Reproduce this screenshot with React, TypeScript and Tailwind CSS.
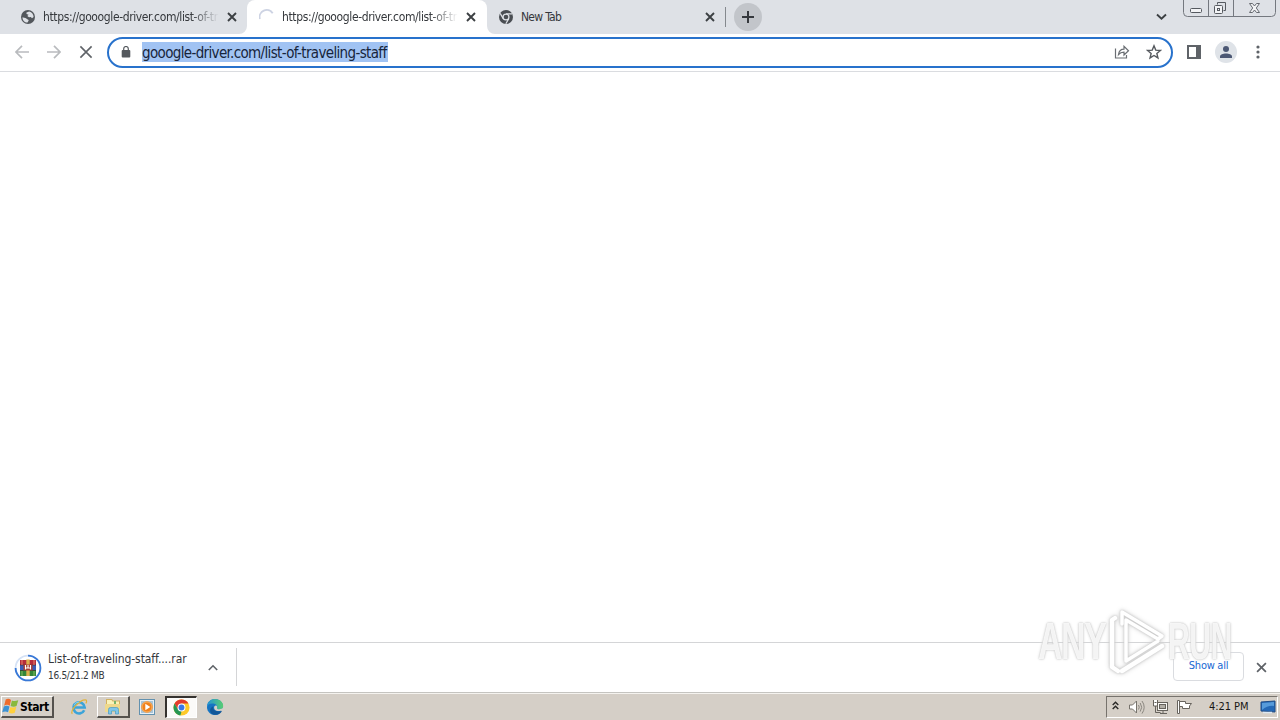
import type { ReactNode } from "react";

const FONT = "font-['DejaVu_Sans_Condensed','DejaVu_Sans',sans-serif] [font-stretch:condensed]";

function Cross({ size, width = 2, color = "#3c4043" }: { size: number; width?: number; color?: string }) {
  return (
    <svg width={size} height={size} viewBox="0 0 10 10" className="block shrink-0">
      <path d="M1 1 9 9M9 1 1 9" stroke={color} strokeWidth={width} fill="none" />
    </svg>
  );
}

function Globe() {
  return (
    <svg width="14" height="14" viewBox="0 0 14 14" className="block shrink-0">
      <circle cx="7" cy="7" r="7" fill="#53575c" />
      <path d="M1.500 7.200C2 8 4.600 7.300 5.300 8.500c.8 1.100 2.200.7 2.400 2.100L6.500 12.600C3.500 12.500 1.300 10.200 1.500 7.200ZM5.500 2.600 8.200 1.500c2.700.6 4.400 3 4.400 5.500L11 8.300 9.800 7.100 8 7.200 6.300 6 7.600 4.800 5.500 4Z" fill="#dee1e6" />
    </svg>
  );
}

function ChromeMono() {
  return (
    <svg width="14" height="14" viewBox="0 0 14 14" className="block shrink-0">
      <circle cx="7" cy="7" r="7" fill="#4a4e53" />
      <path d="M7 3.800h6.200M4.200 8.600 1.200 3.400M9.800 8.600 6.800 13.800" stroke="#dee1e6" strokeWidth="1.200" />
      <circle cx="7" cy="7" r="3.600" fill="#dee1e6" />
      <circle cx="7" cy="7" r="2.300" fill="#4a4e53" />
    </svg>
  );
}

function Spinner() {
  return (
    <svg width="16" height="16" viewBox="0 0 16 16" className="block shrink-0">
      <path d="M.9 10A7.100 7.100 0 0 1 13.700 4.200" fill="none" stroke="#cdd3e3" strokeWidth="1.800" />
    </svg>
  );
}

function TabTitle({ children }: { children: ReactNode }) {
  return (
    <span className="block w-[176px] whitespace-nowrap text-[12px] leading-[16px] tracking-[-0.38px] text-[#35383c] [mask-image:linear-gradient(to_right,black_84%,transparent_100%)]">
      {children}
    </span>
  );
}

function TabStrip() {
  return (
    <header className="flex h-[34px] shrink-0 bg-[#dee1e6]">
      <div className="flex h-[34px] w-[247px] items-center bg-[#dee1e6] pl-[21px]">
        <Globe />
        <div className="ml-2 mr-[8px]"><TabTitle>https://gooogle-driver.com/list-of-tr</TabTitle></div>
        <Cross size={10} width={1.900} />
      </div>
      <div className="relative flex h-[34px] w-[240px] items-center rounded-t-[8px] bg-white pl-[12px]">
        <svg className="absolute bottom-0 left-[-8px]" width="8" height="8"><path d="M8 0A8 8 0 0 1 0 8H8Z" fill="#fff" /></svg>
        <svg className="absolute bottom-0 right-[-8px]" width="8" height="8"><path d="M0 0A8 8 0 0 0 8 8H0Z" fill="#fff" /></svg>
        <Spinner />
        <div className="ml-[7px] mr-[8px]"><TabTitle>https://gooogle-driver.com/list-of-tr</TabTitle></div>
        <Cross size={10} width={1.900} />
      </div>
      <div className="flex h-[34px] w-[239px] items-center pl-[12px]">
        <ChromeMono />
        <span className="ml-2 w-[184px] text-[12px] leading-4 tracking-[-0.7px] text-[#35383c]">New Tab</span>
        <Cross size={10} width={1.900} />
        <i className="ml-auto h-5 w-px bg-[#85898e]" />
      </div>
      <div className="ml-2 mt-[3px] flex h-7 w-7 items-center justify-center rounded-full bg-[#c2c5ca]">
        <svg width="12" height="12" viewBox="0 0 12 12"><path d="M6 0v12M0 6h12" stroke="#35383d" strokeWidth="2" /></svg>
      </div>
      <svg className="ml-auto mt-[13px]" width="11" height="8" viewBox="0 0 11 8"><path d="m1 1.500 4.500 4.200L10 1.500" fill="none" stroke="#3c4043" strokeWidth="1.900" /></svg>
      <svg className="ml-4" width="93" height="18" viewBox="0 0 93 18" fill="none" stroke="#74787f">
        <path d="M.5 0v12.500q0 4 4 4h84q4 0 4-4V0M25.500 0v16M50.500 0v16" />
        <rect x="7.500" y="8.500" width="11" height="4" rx="1" stroke="#55595f" fill="#f2f3f5" />
        <path d="M34.500 4.500v-2h8v8h-2" stroke="#565a60" />
        <rect x="31.500" y="5.500" width="8" height="8" rx="1" stroke="#565a60" fill="#f2f3f5" />
        <rect x="34.500" y="8.500" width="2" height="2" stroke="#565a60" />
        <path d="M66.500 3.500h3l2 2.500 2-2.500h3L73.300 8l3.200 4.500h-3l-2-2.500-2 2.500h-3L69.700 8Z" stroke="#666a70" fill="#f2f3f5" />
      </svg>
      <span className="w-1" />
    </header>
  );
}

function Arrow({ flip = false }: { flip?: boolean }) {
  return (
    <svg width="14" height="14" viewBox="0 0 14 14" className={flip ? "block rotate-180" : "block"}>
      <path d="M14 7H1.200M7 .8.900 7 7 13.200" fill="none" stroke="#b9bbbe" strokeWidth="1.700" />
    </svg>
  );
}

function Toolbar() {
  return (
    <div className="flex h-[38px] shrink-0 items-center border-b border-[#dadce0] bg-white pl-[15px]">
      <div className="mb-px"><Arrow /></div>
      <div className="mb-px ml-[18px]"><Arrow flip /></div>
      <div className="mb-px ml-[18px]"><Cross size={14} width={1.150} color="#5f6368" /></div>
      <div className="ml-[14px] flex h-[31px] w-[1066px] items-center rounded-full border-2 border-[#2872cc] bg-white pl-[12px]">
        <svg width="10" height="12" viewBox="0 0 10 12" className="mb-px mr-[11px] shrink-0">
          <rect x=".7" y="4" width="8.600" height="7.500" rx="1" fill="#55595e" />
          <path d="M2.700 4V2.800a2.300 2.300 0 0 1 4.600 0V4" fill="none" stroke="#55595e" strokeWidth="1.200" />
        </svg>
        <span className="mb-px h-5 w-[246px] whitespace-nowrap bg-[#a1c3f3] text-[15px] leading-[22px] tracking-[-0.65px] text-[#17253b]">gooogle-driver.com/list-of-traveling-staff</span>
        <svg className="mb-px ml-auto mr-4" width="16" height="14" viewBox="0 0 16 14" fill="none" stroke="#6a6e73" strokeWidth="1.200">
          <path d="M1.500 3.500v9.500h11v-3M4.500 9.500C5 6 7 4.200 10 4.200V1.300l4.500 4.400L10 10V7.200C7.500 7.200 5.800 8 4.500 9.500Z" />
        </svg>
        <svg className="mb-px mr-[9px]" width="16" height="16" viewBox="0 0 16 16" fill="none" stroke="#55595e" strokeWidth="1.400">
          <path d="m8 1.800 1.750 4.300 4.650.350-3.550 3 1.100 4.500L8 11.500l-3.950 2.450 1.100-4.500-3.550-3 4.650-.350Z" />
        </svg>
      </div>
      <svg className="mb-px ml-[14px]" width="14" height="14" viewBox="0 0 14 14"><path d="M1 1h12v12H1Z" fill="none" stroke="#5f6368" strokeWidth="2" /><path d="M9 0h5v14H9Z" fill="#5f6368" /></svg>
      <svg className="mb-px ml-[14px]" width="22" height="22" viewBox="0 0 22 22"><circle cx="11" cy="11" r="11" fill="#dfe3e8" /><circle cx="11" cy="8" r="3" fill="#4c5874" /><path d="M5 17v-1.500C5 11.500 17 11.500 17 15.500V17Z" fill="#4c5874" /></svg>
      <svg className="mb-px ml-[19px]" width="4" height="14" viewBox="0 0 4 14" fill="#5f6368"><circle cx="2" cy="2" r="1.600" /><circle cx="2" cy="7" r="1.600" /><circle cx="2" cy="12" r="1.600" /></svg>
    </div>
  );
}

function ArchiveIcon() {
  return (
    <svg width="28" height="28" viewBox="0 0 28 28" className="block shrink-0">
      <circle cx="14" cy="14" r="12.400" fill="none" stroke="#d5e2f5" strokeWidth="1.800" />
      <path d="M14 1.600A12.400 12.400 0 1 1 1.600 14" fill="none" stroke="#3878d7" strokeWidth="1.800" />
      <path d="M6 6h16v5H6Z" fill="#b52c3c" />
      <path d="M6 11h16v5H6Z" fill="#3c5bb5" />
      <path d="M6 16h16v6H6Z" fill="#34853a" />
      <path d="M6 11h16M6 16.500h16" stroke="#382f32" strokeWidth=".7" />
      <path d="M12.300 5.500h3.400V22h-3.400Z" fill="#ddb04e" />
      <path d="M9.500 10.500h9v6h-9Z" fill="#a93e35" />
      <path d="M11.500 15.500v-4.500M14 11v3M16.500 11v4.500M11 14h6" fill="none" stroke="#fff" strokeWidth="1.100" />
      <path d="M8 6v5M20 6v5" stroke="#e7846c" /><path d="M8 17v5M20 17v5" stroke="#83bc5d" />
    </svg>
  );
}

function DownloadShelf() {
  return (
    <div className="flex h-[50px] shrink-0 items-center border-t border-[#d4d5d7] bg-white pl-[14px]">
      <ArchiveIcon />
      <div className="mb-px ml-[6px] w-[153px] whitespace-nowrap text-[#35383c]">
        <div className="text-[12px] leading-4 tracking-[-0.08px]">List-of-traveling-staff....rar</div>
        <div className="mt-px text-[10px] leading-4 tracking-[-0.3px]">16.5/21.2 MB</div>
      </div>
      <svg className="mb-px ml-[7px]" width="10" height="7" viewBox="0 0 10 7"><path d="m.8 6 4.200-4.200L9.200 6" fill="none" stroke="#5f6368" strokeWidth="1.600" /></svg>
      <i className="mb-px ml-[18px] h-[38px] w-px bg-[#d4d5d7]" />
      <div className="mb-[2px] ml-auto flex h-[29px] w-[71px] items-center justify-center rounded-[4px] border border-[#dadce0] text-[11px] tracking-[-0.27px] text-[#1967d2]">Show all</div>
      <div className="mb-px ml-[12px] mr-[13px]"><Cross size={11} width={1.600} color="#5f6368" /></div>
    </div>
  );
}

function WindowsFlag() {
  return (
    <svg width="17" height="17" viewBox="0 0 16 16" className="shrink-0">
      <path d="M3.500 1.500q2.500-1.500 5 .3L7.300 7.200q-2.500-1.500-5.300 0Z" fill="#ef6c2c" />
      <path d="M9.300 2.300q2.500 1.200 6-.2L13.700 7.500q-2.700 1.500-5.600 0Z" fill="#88b93c" />
      <path d="M1.700 8q2.800-1.500 5.300 0l-1.300 5.500q-2.600-1.800-5.500 0Z" fill="#3b92d4" />
      <path d="M7.900 8.400q2.500 1.300 5.600-.1l-1.500 5.500q-2.600 1.300-5.500.1Z" fill="#ffd03d" />
    </svg>
  );
}

function FolderIcon() {
  return (
    <svg width="18" height="17" viewBox="0 0 18 17">
      <path d="M2 1h6l1 1.500h7V14H2Z" fill="#d2b15f" /><path d="M3 2h4.500l1 1.500H15V13H3Z" fill="#faf2b7" />
      <path d="M1 6h15v8H1Z" fill="#efd98b" />
      <path d="M4.500 16v-4.500q0-2 2-2h6q2 0 2 2V16h-3v-3h-4v3Z" fill="#7fc6e9" stroke="#479bc4" strokeWidth=".7" />
      <path d="M11 3v3" stroke="#78b66b" strokeWidth="2" />
    </svg>
  );
}

function InternetExplorer() {
  return (
    <svg width="18" height="18" viewBox="0 0 18 18" fill="none">
      <path d="M14.200 12.200A5.600 5.600 0 1 1 14.700 9.500H5" stroke="#3ca4d9" strokeWidth="2.600" />
      <path d="M2.400 15.800C-1 13 10 1.500 15.500 1.900c1.800.2 1 2.500.3 3.500" stroke="#e1b33b" strokeWidth="1.200" />
      <path d="M4 7.500Q5 4 9 4" stroke="#85d5ef" />
    </svg>
  );
}

function Chrome() {
  return (
    <svg width="17" height="17" viewBox="0 0 18 18">
      <circle cx="9" cy="9" r="8.500" fill="#fdc928" />
      <path d="M1.650 4.750A8.500 8.500 0 0 1 16.350 4.750H9L5.300 11.100Z" fill="#e33b2e" />
      <path d="M1.650 4.750 5.300 11.100 9 13.200 7.800 17.400A8.500 8.500 0 0 1 1.650 4.750Z" fill="#259653" />
      <circle cx="9" cy="9" r="4.200" fill="#fff" /><circle cx="9" cy="9" r="3.100" fill="#3b78e7" />
    </svg>
  );
}

function Edge() {
  return (
    <svg width="18" height="18" viewBox="0 0 18 18">
      <defs><linearGradient id="edge-top" x2="1"><stop stopColor="#2392d6" /><stop offset="1" stopColor="#58ce70" /></linearGradient></defs>
      <path d="M1 9C1 4 5 1 9 1s8 3 8 7.500L14.500 14c-1 1.800-3 3-5.500 3-4.500 0-8-3.500-8-8Z" fill="#1674c2" />
      <path d="M1 9C1 3.500 5 1 9 1c5 0 8.400 3.700 8.200 7.200-.2 2.500-2.500 3.500-5 3-1.700-.4-1.200-1-1-2.200C11.400 6.600 9 5.400 6.500 5.400 3.500 5.400 1.200 7 1 9Z" fill="url(#edge-top)" />
      <path d="M7.200 8.300C6.200 12 10 14.600 16 13l-1 1.500c-2 2.300-6 3.200-9 1.400-3-2.200-2.200-6.200 1.200-7.600Z" fill="#125798" />
      <path d="M8.500 8.200c-1 1.500-.2 4.300 3 4.800 2 .3 3.800-.2 4.800-.8l-.2-1.700q-2 .9-3.900.7c-1.700-.4-1.200-1-1-2.200-.3-1.500-1.800-1.800-2.700-.8Z" fill="#d5cfc7" />
    </svg>
  );
}

function Taskbar() {
  return (
    <footer className="flex h-[28px] shrink-0 items-center border-t border-[#c5c4c0] bg-[#d5cfc7] shadow-[inset_0_1px_0_#f5f3ef]">
      <div className="ml-px mt-px flex h-[22px] w-[53px] items-center border-b-2 border-l border-r-2 border-t border-b-[#55524e] border-l-white border-r-[#55524e] border-t-white">
        <WindowsFlag />
        <span className="ml-px text-[12px] font-bold leading-4 tracking-[-0.4px] text-black">Start</span>
      </div>
      <div className="ml-[16px] mr-px mt-px"><InternetExplorer /></div>
      <div className="ml-2 mt-px flex h-[22px] w-[33px] items-center justify-center border-b-2 border-l border-r-2 border-t border-b-[#55524e] border-l-white border-r-[#55524e] border-t-white"><FolderIcon /></div>
      <svg className="ml-[9px] mt-px" width="16" height="16" viewBox="0 0 16 16">
        <rect x=".5" y=".5" width="15" height="15" fill="#e7f0f6" stroke="#6291af" /><rect x="2" y="2" width="12" height="12" fill="#a9c5d8" /><circle cx="8" cy="8" r="5.800" fill="#ef811d" /><circle cx="8" cy="8" r="5" fill="none" stroke="#ffc67b" strokeWidth=".7" /><path d="m6.300 4.800 5 3.200-5 3.200Z" fill="#fff" />
      </svg>
      <div className="ml-[10px] mt-px flex h-[22px] w-[32px] items-center justify-center border-b border-l-2 border-r border-t-2 border-b-white border-l-[#35322f] border-r-white border-t-[#35322f] bg-[#fbfaf8]"><Chrome /></div>
      <div className="ml-[9px] mt-px"><Edge /></div>
      <div className="ml-auto mr-[2px] mt-px flex h-[22px] w-[172px] items-center border border-b-white border-l-[#77736d] border-r-white border-t-[#77736d]">
        <svg className="mb-[3px] ml-[5px]" width="7" height="9" viewBox="0 0 7 9"><path d="m.7 4 2.800-2.800L6.300 4M.7 8l2.800-2.800L6.300 8" fill="none" stroke="#292826" strokeWidth="1.400" /></svg>
        <svg className="ml-[9px]" width="17" height="17" viewBox="0 0 17 17" fill="none" stroke="#77736c">
          <path d="M1.500 6h3l4-4v12l-4-4h-3Z" fill="#fff" /><path d="M10.500 6q1.500 2.200 0 4.500M12.200 4q3 4.300 0 8.600M14 2q4.400 6.300 0 12.600" stroke="#8a867f" />
        </svg>
        <svg className="ml-[7px]" width="17" height="17" viewBox="0 0 17 17" fill="none" stroke="#67635d">
          <rect x="5.500" y="3.500" width="10" height="8" fill="#faf9f6" /><rect x="7.500" y="5.500" width="6" height="4" fill="#b3afa7" /><path d="M8 14.500h7M11 12v2M3.500 7v6.500h5" /><path d="M1.500 1v6h4V1M2.500 3.500h2" fill="#fff" />
        </svg>
        <svg className="ml-[7px]" width="17" height="17" viewBox="0 0 17 17" fill="#fff" stroke="#67635d"><path d="M3.500 2.500h6v2h6l-2 2.500v2.500h-7v-2h-3" /><path d="M1.500 1.500h2v13h-2Z" /></svg>
        <span className="ml-[16px] whitespace-nowrap text-[11px] leading-4 tracking-[-0.05px] text-[#181715]">4:21 PM</span>
        <svg className="ml-auto mr-px" width="16" height="15" viewBox="0 0 16 15"><path d="m1 2 14-1v11L1 11Z" fill="#2468b6" stroke="#204c85" /><path d="m2 3 12-1v4Q8 5 2 10Z" fill="#579bda" /><path d="M3 12.500h9" stroke="#dce8f3" strokeWidth="1.500" /></svg>
      </div>
    </footer>
  );
}

function Watermark() {
  return (
    <div className="pointer-events-none absolute left-[1030px] top-[600px] h-[90px] w-[220px]">
      <svg width="220" height="90" viewBox="0 0 220 90" fill="none" stroke="#fff" strokeLinejoin="round" strokeLinecap="round" className="[filter:drop-shadow(0_0_1px_#c4c4c4)_drop-shadow(0_0_2px_#d4d4d4)]">
        <path d="M92 24V12l40 24-4 3-32-19v41l32-20" strokeWidth="3.500" />
        <path d="M85 18 82 20v47l6 4M92 71l40-25" strokeWidth="4.500" />
      </svg>
      <span className="absolute left-[8px] top-[13px] origin-left scale-x-[0.65] font-['Liberation_Sans',sans-serif] text-[52px] font-bold leading-[56px] tracking-[-2px] text-white/85 [text-shadow:0_0_2px_#b8b8b8,0_0_4px_#ddd]">ANY</span>
      <span className="absolute left-[138px] top-[13px] origin-left scale-x-[0.58] font-['Liberation_Sans',sans-serif] text-[52px] font-bold leading-[56px] tracking-[-1px] text-white/85 [text-shadow:0_0_2px_#b8b8b8,0_0_4px_#ddd]">RUN</span>
    </div>
  );
}

export default function App() {
  return (
    <div className={`relative flex h-[720px] w-[1280px] flex-col overflow-hidden bg-white ${FONT}`}>
      <TabStrip />
      <Toolbar />
      <main className="flex-1 bg-white" />
      <DownloadShelf />
      <Taskbar />
      <Watermark />
    </div>
  );
}
